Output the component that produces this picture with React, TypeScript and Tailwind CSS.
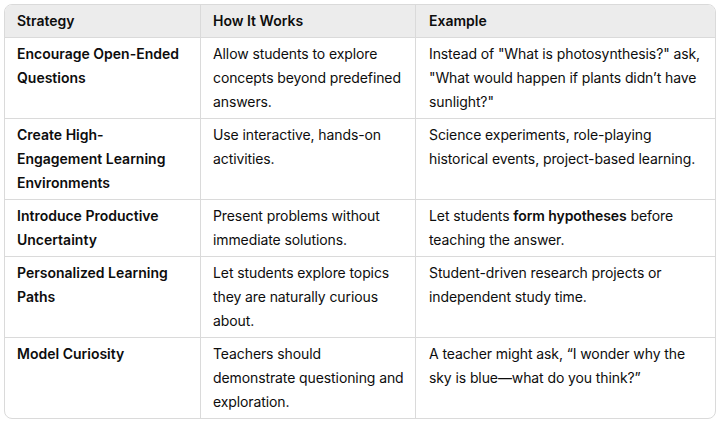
import React from "react";

type Row = { s: string[]; h: string[]; e: React.ReactNode[] };

const rows: Row[] = [
  {
    s: ["Encourage Open-Ended", "Questions"],
    h: ["Allow students to explore", "concepts beyond predefined", "answers."],
    e: ["Instead of \"What is photosynthesis?\" ask,", "\"What would happen if plants didn\u2019t have", "sunlight?\""],
  },
  {
    s: ["Create High-", "Engagement Learning", "Environments"],
    h: ["Use interactive, hands-on", "activities."],
    e: ["Science experiments, role-playing", "historical events, project-based learning."],
  },
  {
    s: ["Introduce Productive", "Uncertainty"],
    h: ["Present problems without", "immediate solutions."],
    e: [
      <>
        Let students <span className="font-semibold">form hypotheses</span> before
      </>,
      "teaching the answer.",
    ],
  },
  {
    s: ["Personalized Learning", "Paths"],
    h: ["Let students explore topics", "they are naturally curious", "about."],
    e: ["Student-driven research projects or", "independent study time."],
  },
  {
    s: ["Model Curiosity"],
    h: ["Teachers should", "demonstrate questioning and", "exploration."],
    e: ["A teacher might ask, \u201cI wonder why the", "sky is blue\u2014what do you think?\u201d"],
  },
];

function Lines({ items }: { items: React.ReactNode[] }) {
  return (
    <>
      {items.map((l, i) => (
        <span key={i} className="block whitespace-nowrap">
          {l}
        </span>
      ))}
    </>
  );
}

export default function App() {
  return (
    <div
      className="w-[721px] h-[424px] bg-white p-1 text-[14px] leading-6 text-[#0d0d0d]"
      style={{ fontFamily: "Inter, 'Noto Sans', sans-serif" }}
    >
      <div className="w-[712px] border border-[#dadada] rounded-lg overflow-hidden">
        <div className="grid grid-cols-[196px_215px_1fr] bg-[#ececec] border-b border-[#dadada] font-semibold">
          <div className="pl-3 py-1 border-r border-[#dadada]">Strategy</div>
          <div className="pl-3 py-1 border-r border-[#dadada]">How It Works</div>
          <div className="pl-[13px] py-1">Example</div>
        </div>
        {rows.map((r, i) => (
          <div
            key={i}
            className={
              "grid grid-cols-[196px_215px_1fr] " +
              (i < rows.length - 1 ? "border-b border-[#dadada]" : "")
            }
          >
            <div className="pl-3 py-1 border-r border-[#dadada] font-semibold">
              <Lines items={r.s} />
            </div>
            <div className="pl-3 py-1 border-r border-[#dadada] tracking-[-0.1px]">
              <Lines items={r.h} />
            </div>
            <div className="pl-[13px] py-1 tracking-[-0.1px]">
              <Lines items={r.e} />
            </div>
          </div>
        ))}
      </div>
    </div>
  );
}
